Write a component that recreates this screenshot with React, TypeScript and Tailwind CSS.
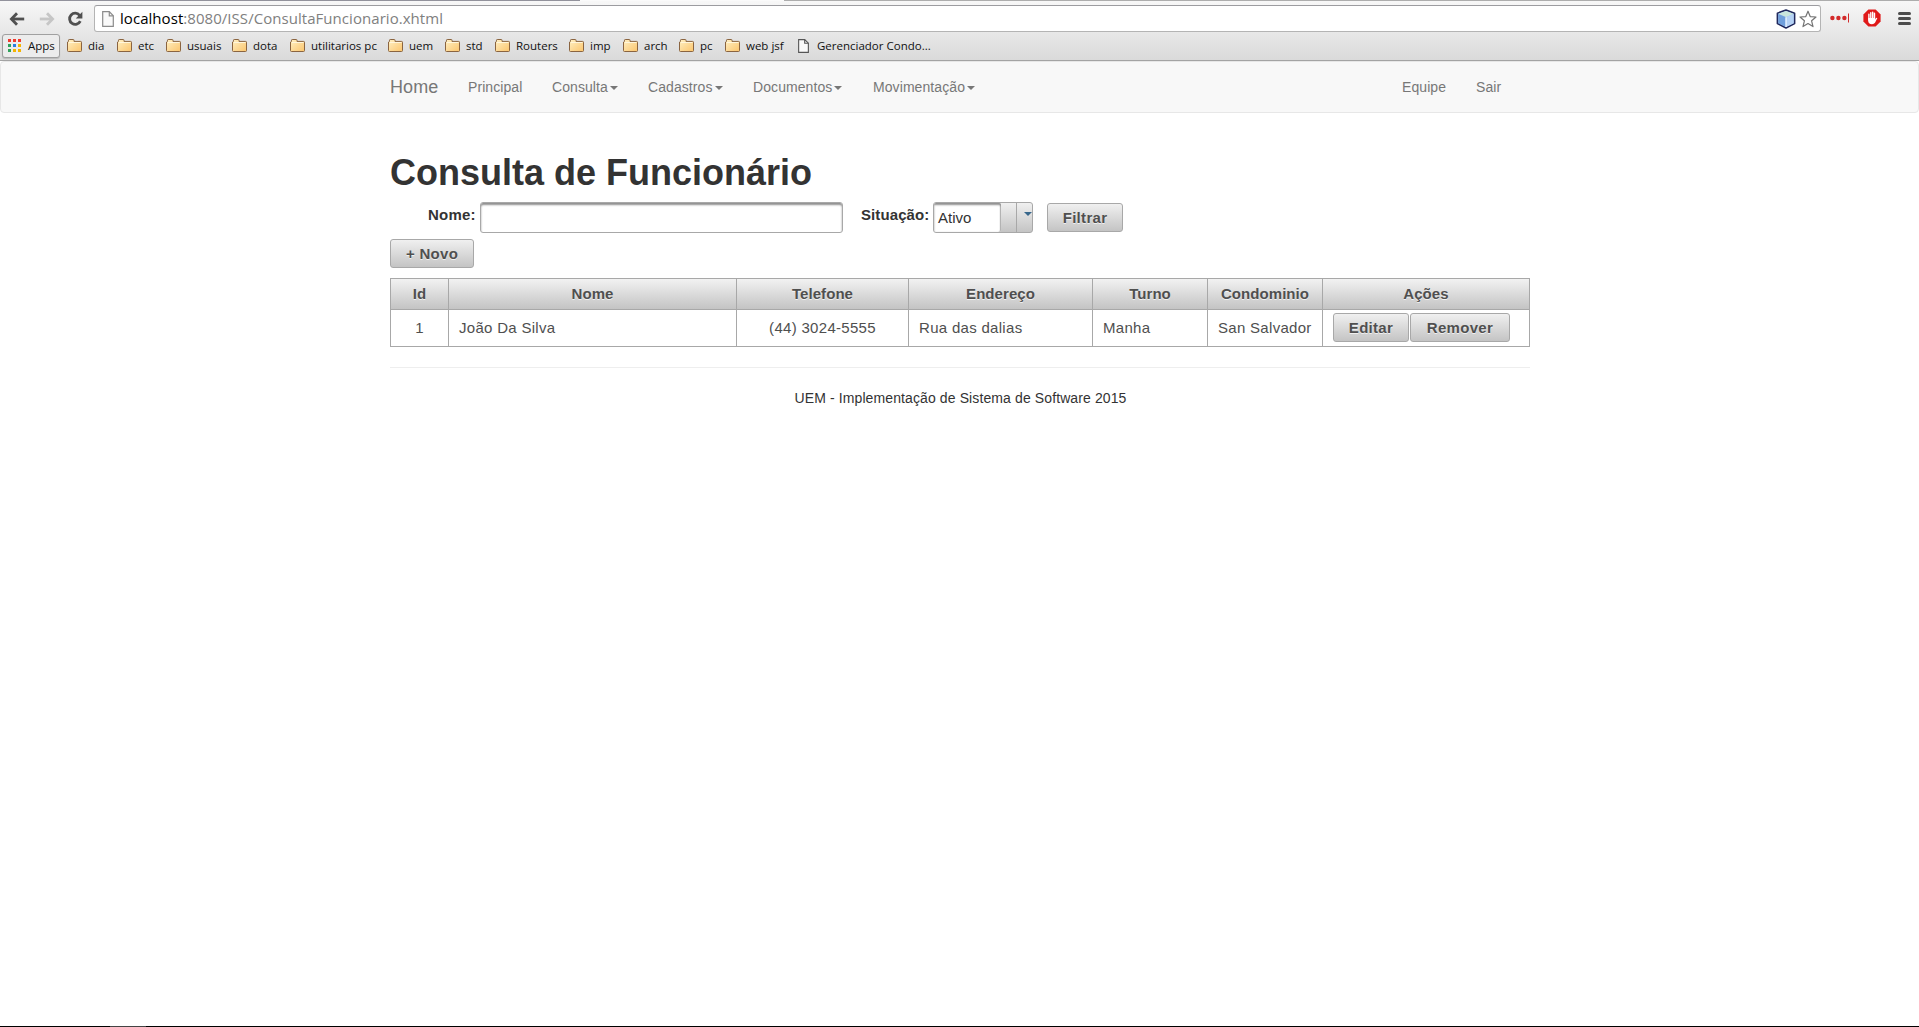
import React from "react";

const UI = "font-['Open_Sans','Noto_Sans',sans-serif]";

const bookmarks = [
  { label: "dia", width: "w-[50px]" },
  { label: "etc", width: "w-[49px]" },
  { label: "usuais", width: "w-[66px]" },
  { label: "dota", width: "w-[58px]" },
  { label: "utilitarios pc", width: "w-[98px]" },
  { label: "uem", width: "w-[57px]" },
  { label: "std", width: "w-[50px]" },
  { label: "Routers", width: "w-[74px]" },
  { label: "imp", width: "w-[54px]" },
  { label: "arch", width: "w-[56px]" },
  { label: "pc", width: "w-[46px]" },
  { label: "web jsf", width: "w-[73px]" },
];

const appColors = [
  "#f03a2e", "#f03a2e", "#f03a2e",
  "#2fa35b", "#2a7de1", "#f5b400",
  "#2fa35b", "#f5b400", "#f5b400",
];

function BackArrow({ color }: { color: string }) {
  return (
    <svg width="16" height="14" viewBox="0 0 16 14" fill="none" stroke={color} strokeWidth="2.8">
      <path d="M8 1.2 L2.4 7 L8 12.8" strokeLinejoin="miter" />
      <path d="M2.6 7 H15.2" />
    </svg>
  );
}

function Reload() {
  return (
    <svg width="17" height="16" viewBox="0 0 17 16">
      <path d="M12.6 4.3 A5.6 5.6 0 1 0 13.3 10.2" fill="none" stroke="#505050" strokeWidth="2.8" />
      <path d="M15.4 0.8 V7.4 H8.8 Z" fill="#505050" />
    </svg>
  );
}

function PageIcon({ color, w, h }: { color: string; w: number; h: number }) {
  return (
    <svg width={w} height={h} viewBox="0 0 12 16" preserveAspectRatio="none">
      <path d="M0.7 0.7 H7.3 L11.3 4.8 V15.3 H0.7 Z" fill="#fafafa" stroke={color} strokeWidth="1.2" />
      <path d="M7.3 0.7 V4.8 H11.3" fill="none" stroke={color} strokeWidth="1.2" />
    </svg>
  );
}

function Folder() {
  return (
    <svg width="15" height="13" viewBox="0 0 15 13">
      <defs>
        <linearGradient id="folder" x1="0" y1="0" x2="1" y2="1">
          <stop offset="0" stopColor="#fff0c4" />
          <stop offset="1" stopColor="#fbc56d" />
        </linearGradient>
      </defs>
      <path
        d="M0.5 11.5 V3 L1.5 2.4 V1.2 Q1.5 0.5 2.2 0.5 H6.4 Q7 0.5 7 1.2 V2.4 H13.5 Q14.5 2.4 14.5 3.2 V11.6 Q14.5 12.5 13.6 12.5 H1.4 Q0.5 12.5 0.5 11.5 Z"
        fill="url(#folder)"
        stroke="#8a6440"
      />
      <path d="M2 3.5 H13.5" stroke="#fff6dc" strokeWidth="1" />
    </svg>
  );
}

function Cube() {
  return (
    <svg width="20" height="20" viewBox="0 0 20 20">
      <path d="M10 1 L18.6 4.2 V14.6 L10 19 L1.4 14.6 V4.2 Z" fill="#a9c8ee" stroke="#20285c" strokeWidth="1.6" strokeLinejoin="round" />
      <path d="M10 2 L17.6 4.8 L10 8 L2.4 4.8 Z" fill="#c9e6dd" />
      <path d="M2.4 5 L10 8.2 V18 L2.4 14.2 Z" fill="#6f9fdc" />
      <path d="M17.6 5 L10 8.2 V18 L17.6 14.2 Z" fill="#b5d2f5" />
      <path d="M10 8.2 V18" stroke="#e8f4ff" strokeWidth="1.4" />
    </svg>
  );
}

function Star() {
  return (
    <svg width="18" height="18" viewBox="0 0 18 18">
      <path
        d="M9 1.2 L11.2 6.6 L17 7 L12.6 10.8 L14 16.6 L9 13.5 L4 16.6 L5.4 10.8 L1 7 L6.8 6.6 Z"
        fill="#fff"
        stroke="#747474"
        strokeWidth="1.2"
        strokeLinejoin="round"
      />
    </svg>
  );
}

function Dots() {
  return (
    <svg width="20" height="10" viewBox="0 0 20 10">
      <circle cx="2.4" cy="5" r="2.2" fill="#d32a2a" />
      <circle cx="8.4" cy="5" r="2.2" fill="#d32a2a" />
      <circle cx="14.4" cy="5" r="2.2" fill="#d32a2a" />
      <rect x="18" y="0.5" width="1" height="9" fill="#d32a2a" />
    </svg>
  );
}

function StopHand() {
  return (
    <svg width="18" height="18" viewBox="0 0 18 18">
      <path d="M5.4 0.4 H12.6 L17.6 5.4 V12.6 L12.6 17.6 H5.4 L0.4 12.6 V5.4 Z" fill="#e01a1a" />
      <g fill="none" stroke="#fff" strokeWidth="1.4" strokeLinecap="round">
        <path d="M5.9 5.2 V11 M7.8 3.6 V10 M9.7 3.1 V10 M11.5 4.3 V11" />
      </g>
      <path d="M5.2 9 H12.2 V10.4 L13.2 8.9 Q14.3 8.3 14.3 9.3 L12 13.8 Q11 15.2 9 15.2 Q5.2 15 5.2 12 Z" fill="#fff" />
    </svg>
  );
}

function BrowserChrome() {
  return (
    <div className={`flex h-[61px] shrink-0 flex-col border-b border-[#a3a3a3] bg-linear-to-b from-[#f8f8f8] to-[#dadada] ${UI}`}>
      <div className="flex h-px shrink-0">
        <div className="w-[580px] bg-[#92929c]" />
        <div className="w-[204px] bg-[#fafafa]" />
        <div className="grow bg-[#adadad]" />
      </div>
      <div className="flex h-[31px] shrink-0 items-start pt-1">
        <div className="ml-[9px] mt-[7px] w-[30px]"><BackArrow color="#505050" /></div>
        <div className="mt-[7px] w-[28px]"><div className="w-4 -scale-x-100"><BackArrow color="#c6c6c6" /></div></div>
        <div className="mt-[6px] w-[27px]"><Reload /></div>
        <div className="flex h-[27px] w-[1727px] items-center rounded-[3px] border border-[#b4b4b4] border-t-[#9c9ca0] bg-white pl-[7px] pr-[3px]">
          <PageIcon color="#8c8c8c" w={12} h={16} />
          <div className="ml-[6px] grow whitespace-nowrap text-[15px] leading-[25px] tracking-[0.05px] text-[#808080]">
            <span className="text-black">localhost</span>:8080/ISS/ConsultaFuncionario.xhtml
          </div>
          <Cube />
          <div className="ml-[3px]"><Star /></div>
        </div>
        <div className="ml-[9px] mt-[8px] w-[33px]"><Dots /></div>
        <div className="mt-[4px] w-[35px]"><StopHand /></div>
        <div className="mt-[7px] flex w-[13px] flex-col gap-[2px]">
          <div className="h-[3px] rounded-full bg-[#4c4c4c]" />
          <div className="h-[3px] rounded-full bg-[#4c4c4c]" />
          <div className="h-[3px] rounded-full bg-[#4c4c4c]" />
        </div>
      </div>
      <div className="flex grow items-start pl-[2px] pt-[2px] text-[11.5px] leading-[22px] text-[#111]">
        <div className="flex h-[24px] w-[58px] items-center rounded-[3px] border border-[#a0a0a0] bg-[#ececec] pb-px pl-[5px] shadow-[0_1px_1px_#bbb]">
          <div className="grid grid-cols-3 gap-[2px]">
            {appColors.map((c, i) => (
              <div key={i} className="size-[3px]" style={{ background: c }} />
            ))}
          </div>
          <span className="ml-[7px]">Apps</span>
        </div>
        <div className="w-[7px]" />
        {bookmarks.map((b) => (
          <div key={b.label} className={`flex h-[23px] shrink-0 items-center gap-[6px] whitespace-nowrap ${b.width}`}>
            <Folder />
            <span>{b.label}</span>
          </div>
        ))}
        <div className="flex h-[23px] items-center gap-[8px] whitespace-nowrap">
          <PageIcon color="#555555" w={11} h={14} />
          <span>Gerenciador Condo...</span>
        </div>
      </div>
    </div>
  );
}

function NavLink({ label, caret = false, width }: { label: string; caret?: boolean; width: string }) {
  return (
    <a className={`flex shrink-0 items-center whitespace-nowrap px-[15px] ${width}`}>
      {label}
      {caret && <span className="ml-[2px] mt-[2px] border-x-4 border-t-4 border-x-transparent border-t-[#777]" />}
    </a>
  );
}

function Navbar() {
  return (
    <nav className="h-[52px] shrink-0 rounded border border-[#e7e7e7] bg-[#f8f8f8] text-[14px] tracking-[0.08px] text-[#777]">
      <div className="ml-[374px] flex h-[50px] w-[1170px]">
        <a className="w-[78px] shrink-0 px-[15px] text-[18px] leading-[50px]">Home</a>
        <NavLink label="Principal" width="w-[84px]" />
        <NavLink label="Consulta" caret width="w-[96px]" />
        <NavLink label="Cadastros" caret width="w-[105px]" />
        <NavLink label="Documentos" caret width="w-[120px]" />
        <NavLink label="Movimentação" caret width="w-[140px]" />
        <div className="grow" />
        <NavLink label="Equipe" width="w-[74px]" />
        <NavLink label="Sair" width="w-[84px]" />
      </div>
    </nav>
  );
}

function Button({ label, width }: { label: string; width: string }) {
  return (
    <button
      className={`h-[29px] shrink-0 whitespace-nowrap rounded-[3px] border border-[#a8a8a8] bg-linear-to-b from-[#f0f0f0] to-[#c4c4c4] text-center text-[15px] font-bold leading-[27px] tracking-[0.3px] text-[#4f4f4f] [text-shadow:0_1px_0_rgba(255,255,255,0.7)] ${width}`}
    >
      {label}
    </button>
  );
}

const inset = "border border-[#a8a8a8] bg-white shadow-[inset_0_2px_2px_#8f8f8f]";

function Filters() {
  return (
    <div className="flex h-[36px] items-start text-[15px] text-[#333]">
      <label className="w-[90px] pl-[38px] pt-[2px] font-bold leading-[22px] tracking-[0.2px]">Nome:</label>
      <input className={`h-[31px] w-[363px] rounded-[3px] ${inset}`} />
      <label className="ml-[18px] w-[72px] whitespace-nowrap pt-[2px] font-bold leading-[22px] tracking-[0.1px]">Situação:</label>
      <div className="flex h-[31px] w-[100px] overflow-hidden rounded-[3px] border border-[#a8a8a8] bg-linear-to-b from-[#f0f0f0] to-[#c4c4c4]">
        <div className="h-[29px] w-[67px] rounded-r-[2px] bg-white pl-1 leading-[29px] shadow-[inset_0_2px_2px_#8f8f8f,inset_-1px_0_1px_#bbb]">Ativo</div>
        <div className="w-[16px] border-r border-[#a8a8a8]" />
        <div className="flex w-[15px] justify-end pt-[9px]">
          <svg width="8" height="4" viewBox="0 0 8 4"><path d="M0 0 H8 L4 4 Z" fill="#38678b" /></svg>
        </div>
      </div>
      <div className="ml-[14px] pt-px"><Button label="Filtrar" width="w-[76px]" /></div>
    </div>
  );
}

const columns = [
  { title: "Id", value: "1", center: true },
  { title: "Nome", value: "João Da Silva" },
  { title: "Telefone", value: "(44) 3024-5555", center: true },
  { title: "Endereço", value: "Rua das dalias" },
  { title: "Turno", value: "Manha" },
  { title: "Condominio", value: "San Salvador" },
];

const grid = "grid grid-cols-[58px_288px_172px_184px_115px_115px_207px]";

function DataTable() {
  return (
    <div className="w-[1140px] border-l border-t border-[#a8a8a8] text-[15px] tracking-[0.3px] text-[#4f4f4f]">
      <div className={`${grid} h-[30px] text-center font-bold leading-[30px] tracking-[0.06px] [text-shadow:0_1px_0_rgba(255,255,255,0.7)]`}>
        {[...columns.map((c) => c.title), "Ações"].map((t) => (
          <div key={t} className="border-b border-r border-[#a8a8a8] bg-linear-to-b from-[#f2f2f2] to-[#c4c4c4]">{t}</div>
        ))}
      </div>
      <div className={`${grid} h-[38px] leading-[37px]`}>
        {columns.map((c) => (
          <div key={c.title} className={`whitespace-nowrap border-b border-r border-[#a8a8a8] ${c.center ? "text-center" : "pl-[10px]"}`}>
            {c.value}
          </div>
        ))}
        <div className="flex gap-px border-b border-r border-[#a8a8a8] pl-[10px] pt-1">
          <Button label="Editar" width="w-[76px]" />
          <Button label="Remover" width="w-[100px]" />
        </div>
      </div>
    </div>
  );
}

export default function App() {
  return (
    <div className="flex h-[1027px] w-[1919px] flex-col overflow-hidden bg-white font-['Liberation_Sans',Arial,sans-serif]">
      <BrowserChrome />
      <Navbar />
      <main className="ml-[390px] w-[1140px] pt-[40px] text-[#333]">
        <h1 className="h-[49px] whitespace-nowrap text-[36px] font-bold leading-[40px]">Consulta de Funcionário</h1>
        <Filters />
        <div className="h-[40px] pt-[1px]"><Button label="+ Novo" width="w-[84px]" /></div>
        <DataTable />
        <div className="mt-[20px] border-t border-[#eee]" />
        <footer className="mt-[20px] pl-px text-center text-[14px] leading-5 tracking-[0.11px]">UEM - Implementação de Sistema de Software 2015</footer>
      </main>
      <div className="mt-auto flex h-px shrink-0 bg-black">
        <div className="ml-[110px] w-[36px] bg-[#444]" />
      </div>
    </div>
  );
}
